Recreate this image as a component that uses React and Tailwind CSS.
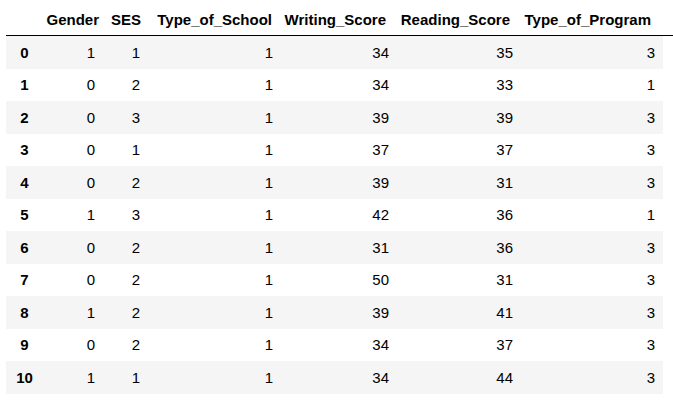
import React from "react";

const rows = [
    [0, 1, 1, 1, 34, 35, 3],
    [1, 0, 2, 1, 34, 33, 1],
    [2, 0, 3, 1, 39, 39, 3],
    [3, 0, 1, 1, 37, 37, 3],
    [4, 0, 2, 1, 39, 31, 3],
    [5, 1, 3, 1, 42, 36, 1],
    [6, 0, 2, 1, 31, 36, 3],
    [7, 0, 2, 1, 50, 31, 3],
    [8, 1, 2, 1, 39, 41, 3],
    [9, 0, 2, 1, 34, 37, 3],
    [10, 1, 1, 1, 34, 44, 3],
];

// width, header padding, cell padding per column
const cols = [
    { w: "w-[37px]", head: "", hp: "", cp: "justify-center" },
    { w: "w-[63px]", head: "Gender", hp: "pr-[7px]", cp: "pr-[11px]" },
    { w: "w-[39px]", head: "SES", hp: "pr-[4px]", cp: "pr-[5px]" },
    { w: "w-[134px]", head: "Type_of_School", hp: "pr-[7px]", cp: "pr-[6px]" },
    { w: "w-[116px]", head: "Writing_Score", hp: "pr-[9px]", cp: "pr-[6px]" },
    { w: "w-[124px]", head: "Reading_Score", hp: "pr-[9px]", cp: "pr-[6px]" },
    { w: "w-[144px]", head: "Type_of_Program", hp: "pr-[12px]", cp: "pr-[8px]" },
];

const App = () => {
    return (
        <div className="w-[673px] h-[402px] bg-white pl-[6px] text-[15px] text-black" style={{ fontFamily: '"Liberation Sans", Arial, sans-serif' }}>
            <div className="flex h-[35px] border-b border-black box-content">
                {cols.map((c, i) => (
                    <div key={i} className={`${c.w} ${c.hp} flex items-end justify-end pb-[7px] font-bold leading-[17px]`}>
                        {c.head}
                    </div>
                ))}
            </div>
            {rows.map((r, ri) => (
                <div key={ri} className={`flex h-[32.5px] w-[657px] ${ri % 2 === 0 ? "bg-[#f5f5f5]" : "bg-white"}`}>
                    {r.map((v, ci) => (
                        <div key={ci} className={`${cols[ci].w} ${ci === 0 ? "justify-center font-bold" : "justify-end " + cols[ci].cp} flex items-center leading-[17px]`}>
                            {v}
                        </div>
                    ))}
                </div>
            ))}
        </div>
    );
};

export default App;
